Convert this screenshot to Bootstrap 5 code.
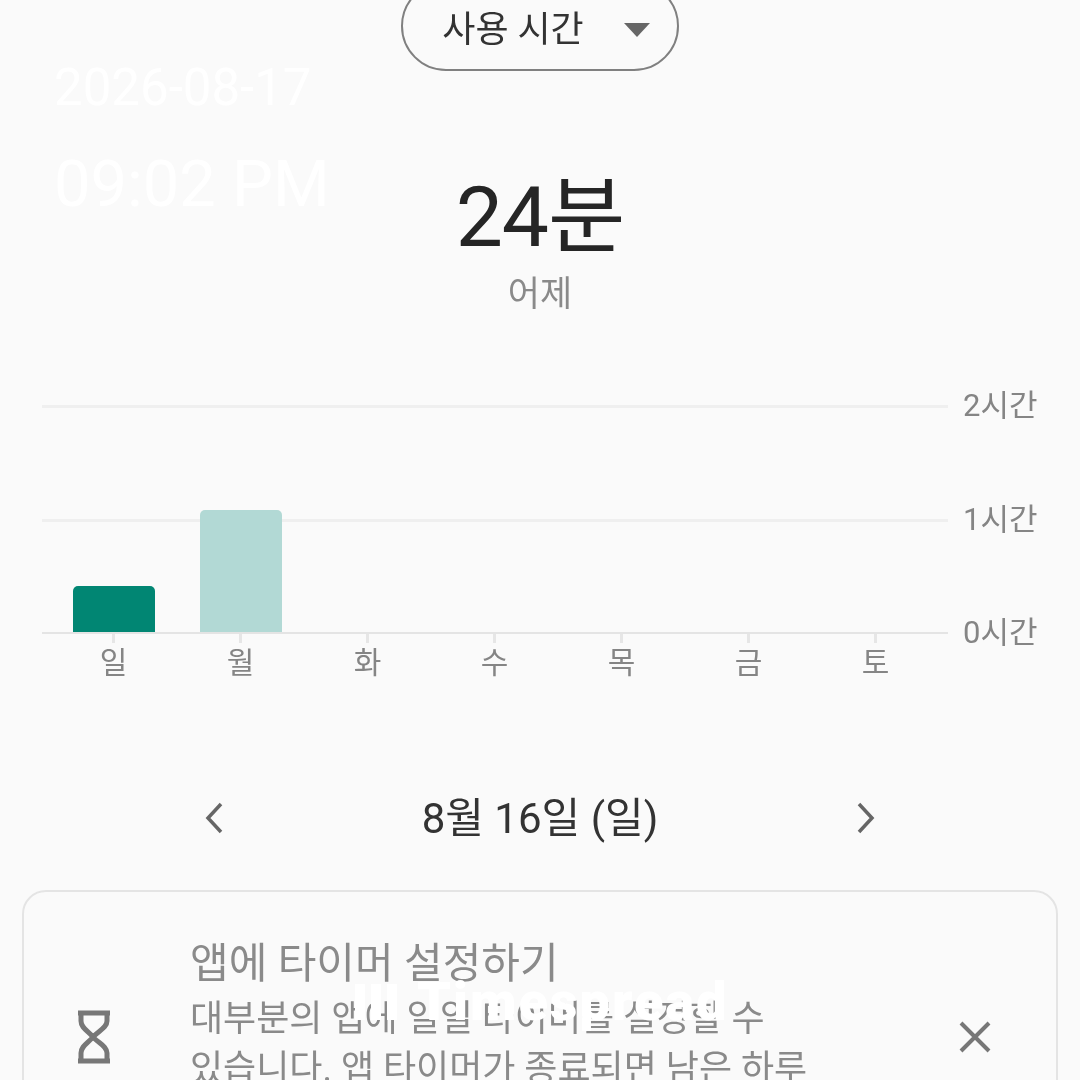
<!DOCTYPE html>
<html lang="ko">
<head>
<meta charset="utf-8">
<link href="https://cdn.jsdelivr.net/npm/bootstrap@5.3.0/dist/css/bootstrap.min.css" rel="stylesheet">
<style>
html,body{height:1080px;overflow:hidden}
body{background:#fafafa;font-family:"Roboto","Noto Sans CJK KR",sans-serif;color:#252525;position:relative}
.screen{width:1080px;height:1080px;overflow:hidden;filter:blur(.6px)}
.pill{width:278px;height:90px;margin-top:-19px;border:2px solid #808080;border-radius:45px;font-size:36px;color:#333;gap:40px;padding-left:12px}
.pilltext{position:relative;top:4px}
.caret{width:0;height:0;border-left:13px solid transparent;border-right:13px solid transparent;border-top:14px solid #666;margin-top:8px}
.total{font-size:84px;line-height:100px;margin-top:97px;letter-spacing:-1px;color:#252525}
.when{font-size:35px;line-height:44px;color:#8a8a8a;margin-top:5px}
.chart{margin-top:88px;padding-left:42px}
.plot{width:906px;height:229px}
.gridline{height:3px;background:#efefef}
.axis{height:2px;background:#e4e4e4}
.ylabs{margin-left:15px;margin-top:-17px;height:263px}
.ylab{font-size:31px;color:#858585;line-height:36px;white-space:nowrap}
.barlayer{position:absolute;left:0;right:0;bottom:2px;padding-left:8px;display:flex;align-items:flex-end}
.slot{width:127px;display:flex;justify-content:center}
.barbox{width:82px;border-radius:5px 5px 0 0}
.b1{background:#018673}
.b2{background:#b2d9d5}
.days{width:906px;padding-left:8px;display:flex}
.dayc{width:127px;text-align:center;font-size:30px;line-height:36px;color:#858585}
.tick{width:3px;height:9px;background:#e6e6e6;margin:0 auto 2px}
.nav-row{height:70px;margin-top:103px;padding:0 202px}
.nav-row svg{margin-bottom:3px}
.navdate{font-size:42px;color:#333;line-height:50px}
.tip{margin:36px 22px 0;height:300px;border:2px solid #e4e4e4;border-radius:24px;display:flex;align-items:flex-start}
.tipicon{width:166px;padding-top:118px;padding-left:52px}
.tipbody{width:720px;padding-top:41px}
.tiphead{font-size:42px;line-height:61px;color:#8a8a8a}
.tiptext{font-size:36px;line-height:50px;color:#8a8a8a;white-space:nowrap}
.tipx{padding-top:128px;padding-left:48px}
.stamp{position:absolute;left:54px;color:#fff;white-space:nowrap;line-height:1}
.stamp-d{top:62px;font-size:51px}
.stamp-t{top:152px;font-size:65px}
.wm{position:absolute;left:355px;top:967px;color:#fff;font-weight:900;font-size:54px;letter-spacing:2px;line-height:70px;white-space:nowrap}
.wmbars{display:inline-flex;gap:6px;align-items:flex-end;height:36px;margin-right:20px}
.wmbars i{display:block;width:10px;height:36px;background:#fff}
</style>
</head>
<body>
<div class="screen">
  <div class="d-flex justify-content-center">
    <div class="pill d-flex align-items-center justify-content-center">
      <span class="pilltext">사용 시간</span><span class="caret"></span>
    </div>
  </div>
  <div class="total text-center">24분</div>
  <div class="when text-center">어제</div>
  <div class="chart">
    <div class="d-flex">
      <div>
        <div class="plot position-relative d-flex flex-column justify-content-between">
          <div class="gridline"></div>
          <div class="gridline"></div>
          <div class="axis"></div>
          <div class="barlayer">
            <div class="slot"><div class="barbox b1" style="height:46px"></div></div>
            <div class="slot"><div class="barbox b2" style="height:122px"></div></div>
          </div>
        </div>
        <div class="days">
          <div class="dayc"><div class="tick"></div>일</div>
          <div class="dayc"><div class="tick"></div>월</div>
          <div class="dayc"><div class="tick"></div>화</div>
          <div class="dayc"><div class="tick"></div>수</div>
          <div class="dayc"><div class="tick"></div>목</div>
          <div class="dayc"><div class="tick"></div>금</div>
          <div class="dayc"><div class="tick"></div>토</div>
        </div>
      </div>
      <div class="ylabs d-flex flex-column justify-content-between">
        <div class="ylab">2시간</div>
        <div class="ylab">1시간</div>
        <div class="ylab">0시간</div>
      </div>
    </div>
  </div>
  <div class="nav-row d-flex align-items-center justify-content-between">
    <svg width="24" height="36" viewBox="0 0 24 36"><path d="M19 4 6 18l13 14" fill="none" stroke="#666" stroke-width="3.5"/></svg>
    <div class="navdate">8월 16일 (일)</div>
    <svg width="24" height="36" viewBox="0 0 24 36"><path d="M5 4l13 14L5 32" fill="none" stroke="#666" stroke-width="3.5"/></svg>
  </div>
  <div class="tip">
    <div class="tipicon"><svg width="36" height="54" viewBox="0 0 36 54"><path d="M2 3h32M2 51h32M5 3v8c0 7 7 10 12 16 5-6 14-9 14-16V3M5 51v-8c0-7 7-10 12-16 5 6 14 9 14 16v8" fill="none" stroke="#777" stroke-width="5"/></svg></div>
    <div class="tipbody">
      <div class="tiphead">앱에 타이머 설정하기</div>
      <div class="tiptext">대부분의 앱에 일일 타이머를 설정할 수</div>
      <div class="tiptext">있습니다. 앱 타이머가 종료되면 남은 하루</div>
    </div>
    <div class="tipx"><svg width="34" height="34" viewBox="0 0 34 34"><path d="M3 3l28 28M31 3 3 31" fill="none" stroke="#777" stroke-width="4"/></svg></div>
  </div>
</div>
<div class="stamp stamp-d">2026-08-17</div>
<div class="stamp stamp-t">09:02 PM</div>
<div class="wm"><span class="wmbars"><i></i><i></i><i></i></span>Timespread</div>
</body>
</html>
